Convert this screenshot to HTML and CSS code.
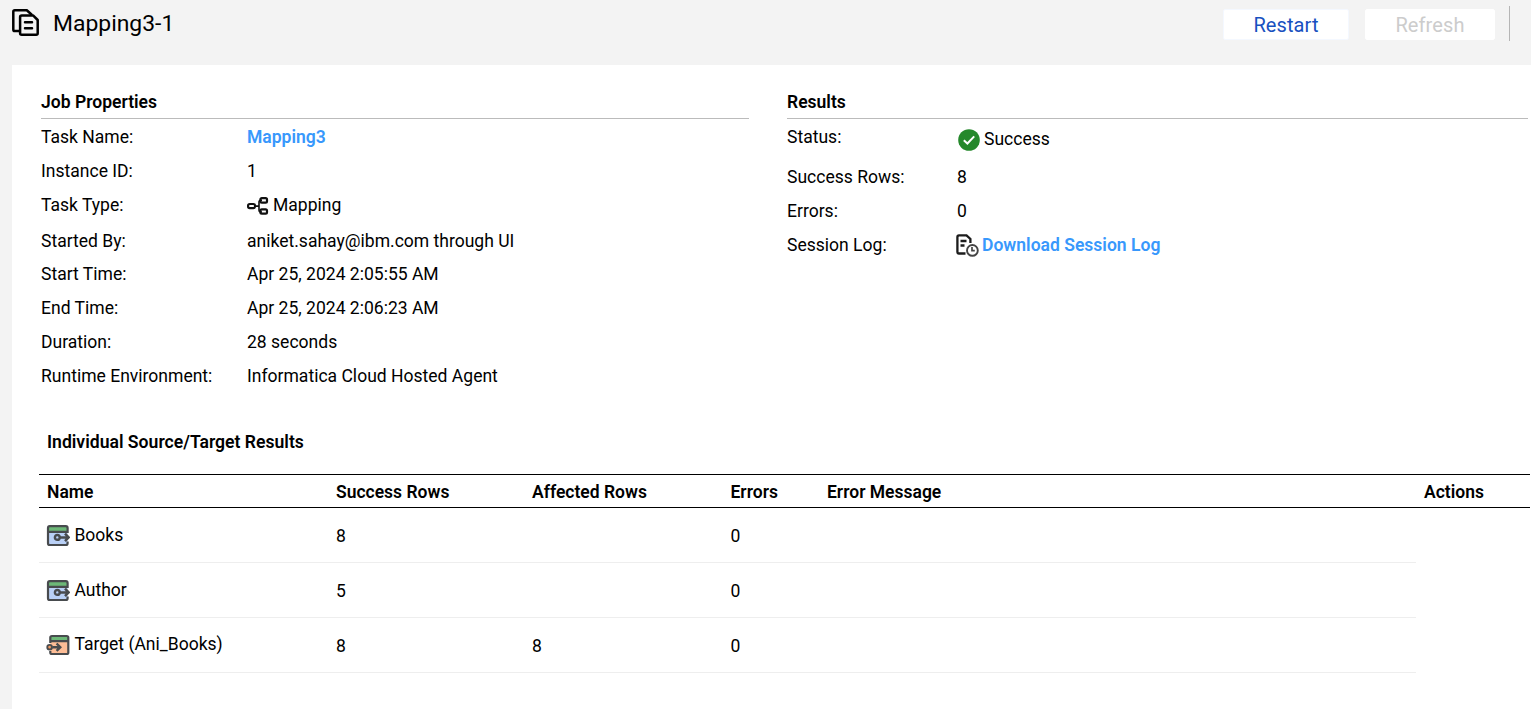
FILE: index.html
```html
<!DOCTYPE html>
<html lang="en">
<head>
<meta charset="utf-8">
<title>Mapping3-1</title>
<link rel="stylesheet" href="styles.css">
</head>
<body>
<svg class="defs" width="0" height="0">
  <symbol id="source" viewBox="0 0 24 24">
    <rect x="2" y="2.2" width="19.6" height="18.8" rx="2" fill="#b9d0f6"/>
    <path d="M2.5 2.5h18.5v5H2.5z" fill="#6db878"/>
    <path d="M21.6 9V4Q21.6 2.2 19.8 2.2H3.8Q2 2.2 2 4V19.2Q2 21 3.8 21H19.8Q21.6 21 21.6 19.2V17.5M2 7.8H21.6" fill="none" stroke="#484b4e" stroke-width="2.2"/>
    <circle cx="11.3" cy="13.4" r="2.4" fill="#b9d0f6" stroke="#484b4e" stroke-width="2.4"/>
    <path d="M14 13.4H22.5M19 9.7L22.6 13.4L19 17.1" fill="none" stroke="#484b4e" stroke-width="2.5"/>
  </symbol>
</svg>
<header class="topbar">
  <svg class="page-icon" width="28" height="28" viewBox="0 0 28 28" fill="none" stroke="#000" stroke-width="2.5" stroke-linejoin="round" stroke-linecap="round">
    <path d="M7 22H2.8Q1.3 22 1.3 20.4V2.8Q1.3 1.3 2.8 1.3H14.8L19.5 5.5"/>
    <path d="M9.7 6.6H21.3L25.7 11V24.2Q25.7 25.7 24.2 25.7H9.7Q8.1 25.7 8.1 24.2V8.2Q8.1 6.6 9.7 6.6Z"/>
    <path d="M13 13.3H20M13 19.3H20"/>
  </svg>
  <h1 class="page-title">Mapping3-1</h1>
  <button class="btn restart">Restart</button>
  <button class="btn refresh" disabled>Refresh</button>
  <span class="divider"></span>
</header>
<main class="panel">
  <div class="summary">
    <section class="job">
      <h2 class="heading">Job Properties</h2>
      <dl class="props">
        <dt>Task Name:</dt><dd><a class="link">Mapping3</a></dd>
        <dt>Instance ID:</dt><dd>1</dd>
        <dt>Task Type:</dt>
        <dd class="with-icon type"><svg width="22" height="18" viewBox="0 0 22 18" fill="none" stroke="#111" stroke-width="2.2"><rect x="1.1" y="7" width="6.9" height="4.2" rx="1.6"/><path d="M8 9.1H12M15 3.2H13.8Q12 3.2 12 5V13Q12 15 13.8 15H15" stroke-width="1.6"/><rect x="13.4" y="1.2" width="6.6" height="4.4" rx="1.4"/><rect x="13.4" y="12.3" width="6.6" height="4.4" rx="1.4"/></svg><span>Mapping</span></dd>
        <dt>Started By:</dt><dd>aniket.sahay@ibm.com through UI</dd>
        <dt>Start Time:</dt><dd>Apr 25, 2024 2:05:55 AM</dd>
        <dt>End Time:</dt><dd>Apr 25, 2024 2:06:23 AM</dd>
        <dt>Duration:</dt><dd>28 seconds</dd>
        <dt>Runtime Environment:</dt><dd>Informatica Cloud Hosted Agent</dd>
      </dl>
    </section>
    <section class="results">
      <h2 class="heading">Results</h2>
      <dl class="props">
        <dt>Status:</dt>
        <dd class="with-icon status"><svg width="22" height="22" viewBox="0 0 22 22"><circle cx="11" cy="11" r="10.8" fill="#25882b"/><path d="M5.8 11.3L9.4 14.5L16.2 7.4" fill="none" stroke="#fff" stroke-width="2"/></svg><span>Success</span></dd>
        <dt>Success Rows:</dt><dd>8</dd>
        <dt>Errors:</dt><dd>0</dd>
        <dt>Session Log:</dt>
        <dd class="with-icon log"><svg width="23" height="23" viewBox="0 0 23 23" fill="none" stroke="#1c1c1c" stroke-width="2.3"><path d="M9.5 19.5H3Q1.4 19.5 1.4 17.7V3Q1.4 1.4 3 1.4H10.5L14.4 5V9M4.5 7H10.5M4.5 11.5H8.5"/><circle cx="16.4" cy="16.4" r="5.4" fill="#fff" stroke="#444" stroke-width="1.9"/><path d="M16 13V16.7H18.8" stroke="#444" stroke-width="1.7"/></svg><a class="link">Download Session Log</a></dd>
      </dl>
    </section>
  </div>
  <section class="individual">
    <h2 class="table-title">Individual Source/Target Results</h2>
    <div class="row head"><span>Name</span><span>Success Rows</span><span>Affected Rows</span><span>Errors</span><span>Error Message</span><span>Actions</span></div>
    <div class="row"><span class="name"><svg width="24" height="24"><use href="#source"/></svg>Books</span><span>8</span><span></span><span>0</span></div>
    <div class="row"><span class="name"><svg width="24" height="24"><use href="#source"/></svg>Author</span><span>5</span><span></span><span>0</span></div>
    <div class="row"><span class="name target"><svg width="24" height="24" viewBox="0 0 24 24">
      <rect x="4.3" y="3" width="18" height="18" rx="1.5" fill="#fdbd96"/>
      <path d="M4.5 3H22v5H4.5z" fill="#6db878"/>
      <path d="M4.3 10V4.6Q4.3 3 6 3H20.7Q22.3 3 22.3 4.6V19.4Q22.3 21 20.7 21H6Q4.3 21 4.3 19.4V18M4.3 8.2H22.3" fill="none" stroke="#484b4e" stroke-width="2.2"/>
      <circle cx="3.6" cy="14.2" r="2.3" fill="#f39a61" stroke="#484b4e" stroke-width="1.9"/>
      <path d="M6.3 14.2H14M10.6 10.5L14.3 14.2L10.6 17.9" fill="none" stroke="#484b4e" stroke-width="2.4"/></svg>Target (Ani_Books)</span><span>8</span><span>8</span><span>0</span></div>
  </section>
</main>
</body>
</html>
```
FILE: styles.css
```css
* { box-sizing: border-box; }
body {
  margin: 0;
  height: 709px;
  overflow: hidden;
  background: #f3f3f3;
  color: #000;
  font: 400 17.55px/24px Roboto, sans-serif;
}
h1, h2, dl, dd { margin: 0; }
.defs { display: none; }
.topbar { height: 65px; display: flex; align-items: flex-start; padding: 6px 21px 0 12px; }
.page-icon { margin-top: 3px; }
.page-title { margin: 2px auto 0 13px; font-size: 22.9px; line-height: 32px; font-weight: 400; }
.btn {
  height: 31px;
  margin-top: 3px;
  padding: 0;
  border: 1px solid #fff;
  border-radius: 2px;
  background: #fff;
  font: 400 20px/28px Roboto, sans-serif;
  letter-spacing: .1px;
}
.restart { width: 126px; margin-right: 16px; color: #1850c0; border-color: #f4f8ff; }
.refresh { width: 130px; margin-right: 14px; color: #ccc; }
.divider { width: 1px; height: 35px; background: #b5b5b5; }
.panel { margin-left: 12px; height: 644px; background: #fff; padding: 24px 1px 0 27px; }
.summary { display: flex; padding-left: 2px; height: 341px; }
.job { width: 708px; margin-right: 38px; }
.results { width: 741px; }
.heading { height: 30px; border-bottom: 1px solid #bbb; font-size: 17.55px; line-height: 26px; font-weight: 600; }
.props { display: grid; grid-template-columns: 206px 1fr; padding-top: 1px; line-height: 34px; white-space: nowrap; }
.job .props { grid-template-rows: 34px 34px 36px 33px 34px 34px 34px 34px; }
.results .props { grid-template-columns: 170px 1fr; grid-template-rows: 40px 34px 34px 34px; }
.link { color: #3898fc; font-size: 17.55px; font-weight: 600; }
.with-icon { display: flex; align-items: center; gap: 4px; height: 34px; }
.type svg { margin-top: 2px; }
.status { height: 38px; padding-left: 1px; }
.status svg { margin-top: 2px; }
.log { margin-left: -1px; gap: 3px; }
.log svg { margin-top: 1px; }
.table-title { padding-left: 8px; height: 44px; font-size: 17.6px; line-height: 24px; font-weight: 600; }
.row {
  display: grid;
  grid-template-columns: 289px 196px 198.5px 96.5px 597px 1fr;
  width: 1377px;
  height: 55px;
  padding-left: 8px;
  border-bottom: 1px solid #eee;
  line-height: 56px;
}
.head { width: auto; height: 34px; border-top: 1px solid #000; border-bottom-color: #000; font-size: 17.5px; font-weight: 600; line-height: 34px; }
.name { display: flex; align-items: center; gap: 4px; height: 54px; line-height: 52px; }
.name svg { margin: 2px 0 0 -.6px; }
.target { height: 52px; line-height: 50px; }
```
